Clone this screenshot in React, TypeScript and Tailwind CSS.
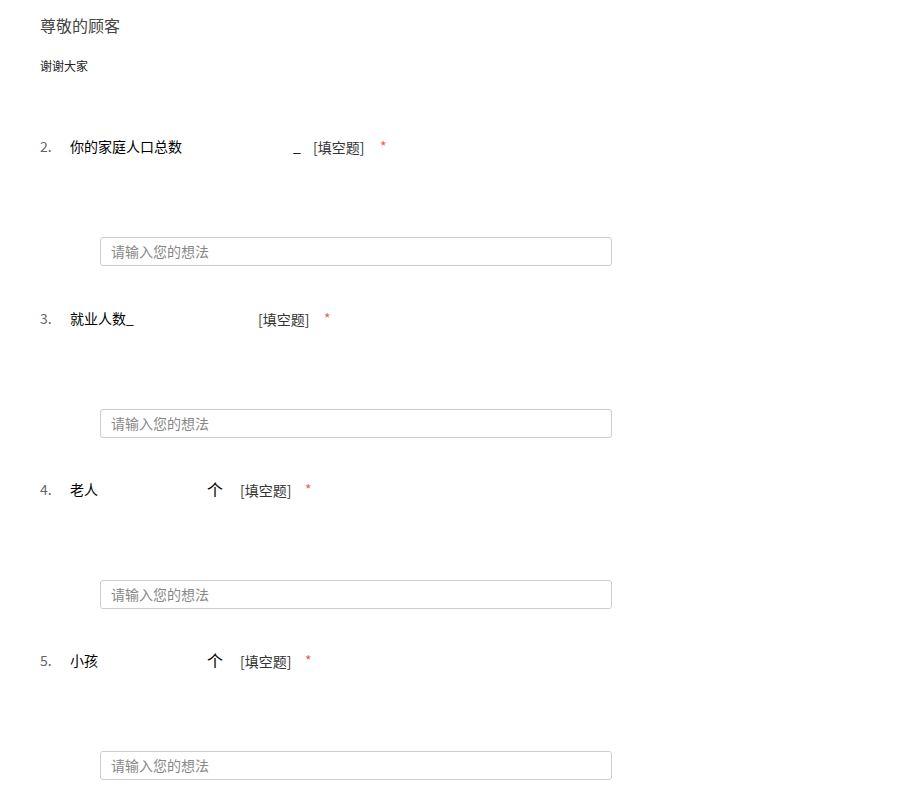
import React from "react";

const font = { fontFamily: '"Noto Sans CJK SC", "Noto Sans", sans-serif' };

function Input() {
  return (
    <div className="ml-[100px] w-[512px] h-[29px] border border-[#cccccc] rounded-[3px] bg-white flex items-center pl-[10px] text-[14px] text-[#888888]">
      请输入您的想法
    </div>
  );
}

function Tag() {
  return <span className="text-[14px] text-[#333333]">[填空题]</span>;
}

function Star() {
  return <span className="text-[14px] text-[#f05a5a]">*</span>;
}

export default function App() {
  return (
    <div className="w-[900px] h-[800px] bg-white overflow-hidden" style={font}>
      <div className="pl-[40px] pt-[14px] leading-[22px] text-[16px] text-[#444444]">尊敬的顾客</div>
      <div className="pl-[40px] mt-[21px] leading-[18px] text-[12px] text-[#222222]">谢谢大家</div>

      {/* Q2 */}
      <div className="mt-[61px] flex items-center h-[20px] leading-[20px]">
        <span className="w-[30px] ml-[40px] text-[14px] text-[#666666]">2.</span>
        <span className="w-[223px] text-[14px] text-black">你的家庭人口总数</span>
        <span className="w-[20px] text-[14px] text-black">_</span>
        <span className="w-[67px]"><Tag /></span>
        <Star />
      </div>
      <div className="mt-[81px]"><Input /></div>

      {/* Q3 */}
      <div className="mt-[42px] flex items-center h-[20px] leading-[20px]">
        <span className="w-[30px] ml-[40px] text-[14px] text-[#666666]">3.</span>
        <span className="w-[188px] text-[14px] text-black">就业人数_</span>
        <span className="w-[66px]"><Tag /></span>
        <Star />
      </div>
      <div className="mt-[81px]"><Input /></div>

      {/* Q4 */}
      <div className="mt-[41px] flex items-center h-[20px] leading-[20px]">
        <span className="w-[30px] ml-[40px] text-[14px] text-[#666666]">4.</span>
        <span className="w-[137px] text-[14px] text-black">老人</span>
        <span className="w-[33px] text-[16px] text-black">个</span>
        <span className="w-[65px]"><Tag /></span>
        <Star />
      </div>
      <div className="mt-[81px]"><Input /></div>

      {/* Q5 */}
      <div className="mt-[41px] flex items-center h-[20px] leading-[20px]">
        <span className="w-[30px] ml-[40px] text-[14px] text-[#666666]">5.</span>
        <span className="w-[137px] text-[14px] text-black">小孩</span>
        <span className="w-[33px] text-[16px] text-black">个</span>
        <span className="w-[65px]"><Tag /></span>
        <Star />
      </div>
      <div className="mt-[81px]"><Input /></div>
    </div>
  );
}
